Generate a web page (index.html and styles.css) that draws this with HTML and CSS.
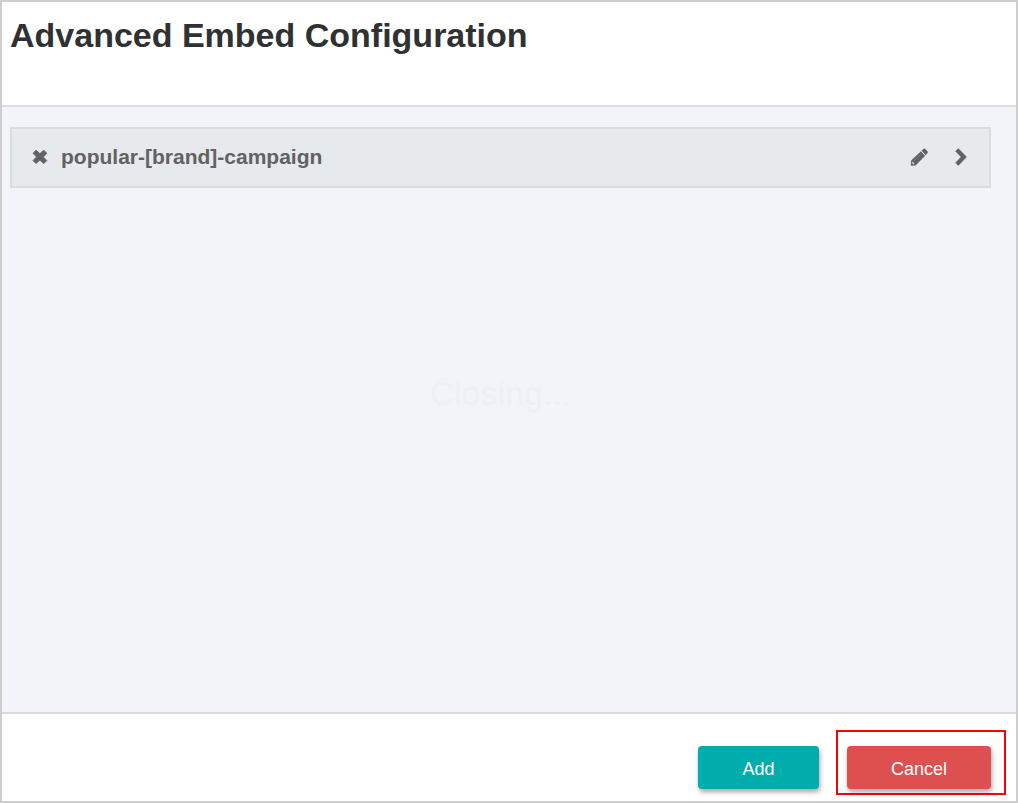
FILE: index.html
```html
<!DOCTYPE html>
<html lang="en">
<head>
<meta charset="utf-8">
<title>Advanced Embed Configuration</title>
<link rel="stylesheet" href="styles.css">
</head>
<body>
<main class="dialog">
  <header class="dialog-header">
    <h1 class="dialog-title">Advanced Embed Configuration</h1>
  </header>
  <section class="dialog-body">
    <div class="item">
      <button class="icon-button" type="button" aria-label="Remove">
        <svg width="16" height="16" viewBox="0 0 16 16"><path d="M4 1.2 7.9 4.6 11.8 1.2 14.8 4.2 11.3 7.9 14.8 11.6 11.8 14.6 7.9 11.2 4 14.6 1 11.6 4.5 7.9 1 4.2Z" fill="currentColor" stroke="currentColor" stroke-width=".8" stroke-linejoin="round"/></svg>
      </button>
      <span class="item-name">popular-[brand]-campaign</span>
      <button class="icon-button" type="button" aria-label="Edit">
        <svg width="20" height="20" viewBox="0 0 20 20"><path d="M2 18.5 2.3 13.4 11.9 4.6 15.9 8.8 6.6 18.2ZM12.8 3.8 14.5 2Q15.3 1.3 16.1 2L18.4 4.4Q19.2 5.2 18.4 6L16.7 7.9Z" fill="currentColor" stroke="currentColor" stroke-width=".4" stroke-linejoin="round"/><path d="M3.4 14.6 5.6 16.9 4.3 17.2 3.1 16Z" fill="#e6eaed"/><path d="M5 14 12 7.2" stroke="#85878a" stroke-width=".7"/></svg>
      </button>
      <button class="icon-button" type="button" aria-label="Expand">
        <svg width="20" height="20" viewBox="0 0 20 20"><path d="M7.3 1.6 15 9.5Q15.5 10 15 10.5L7.3 18.4 4.6 15.8 10.2 10 4.6 4.2Z" fill="currentColor" stroke="currentColor" stroke-width=".6" stroke-linejoin="round"/></svg>
      </button>
    </div>
    <p class="status">Closing...</p>
  </section>
  <footer class="dialog-footer">
    <button class="button button-add" type="button">Add</button>
    <div class="highlight">
      <button class="button button-cancel" type="button">Cancel</button>
    </div>
  </footer>
</main>
</body>
</html>
```
FILE: styles.css
```css
* {
  box-sizing: border-box;
}

body {
  margin: 0;
  font-family: "Liberation Sans", Arial, sans-serif;
}

.dialog {
  display: flex;
  flex-direction: column;
  min-height: 100vh;
  border: 2px solid #cecece;
  background: #fff;
}

.dialog-header {
  padding: 13px 8px 50px;
  border-bottom: 2px solid #dbdcdd;
}

.dialog-title {
  margin: 0;
  font-size: 34px;
  line-height: 40px;
  color: #303132;
}

.dialog-body {
  flex: 1;
  display: flex;
  flex-direction: column;
  padding: 20px 25px 20px 8px;
  background: #f3f4f9;
}

.item {
  display: flex;
  align-items: center;
  padding: 15px 18px 17px 20px;
  border: 2px solid #d9dbdc;
  background: #e6eaed;
  color: #616263;
}

.item-name {
  flex: 1;
  margin-left: 13px;
  font-size: 21px;
  line-height: 25px;
  font-weight: bold;
}

.icon-button {
  display: flex;
  padding: 0;
  border: 0;
  background: none;
  color: inherit;
}

.icon-button + .icon-button {
  margin-left: 22px;
}

.status {
  margin: 185px 0 0;
  font-size: 34px;
  line-height: 40px;
  text-align: center;
  color: #eff0f4;
}

.dialog-footer {
  display: flex;
  justify-content: flex-end;
  align-items: center;
  gap: 17px;
  padding: 16px 10px 6px;
  border-top: 2px solid #d9dadb;
}

.highlight {
  padding: 14px 13px 4px 9px;
  border: 2px solid #f00;
}

.button {
  display: block;
  width: 144px;
  height: 43px;
  padding: 4px 0 0;
  border: 0;
  border-radius: 4px;
  box-shadow: 1px 3px 5px rgba(0, 0, 0, 0.35);
  font: 18px "Liberation Sans", Arial, sans-serif;
  color: #fff;
}

.button-add {
  width: 121px;
  margin-top: 10px;
  background: #00adad;
}

.button-cancel {
  background: #de5050;
}
```
